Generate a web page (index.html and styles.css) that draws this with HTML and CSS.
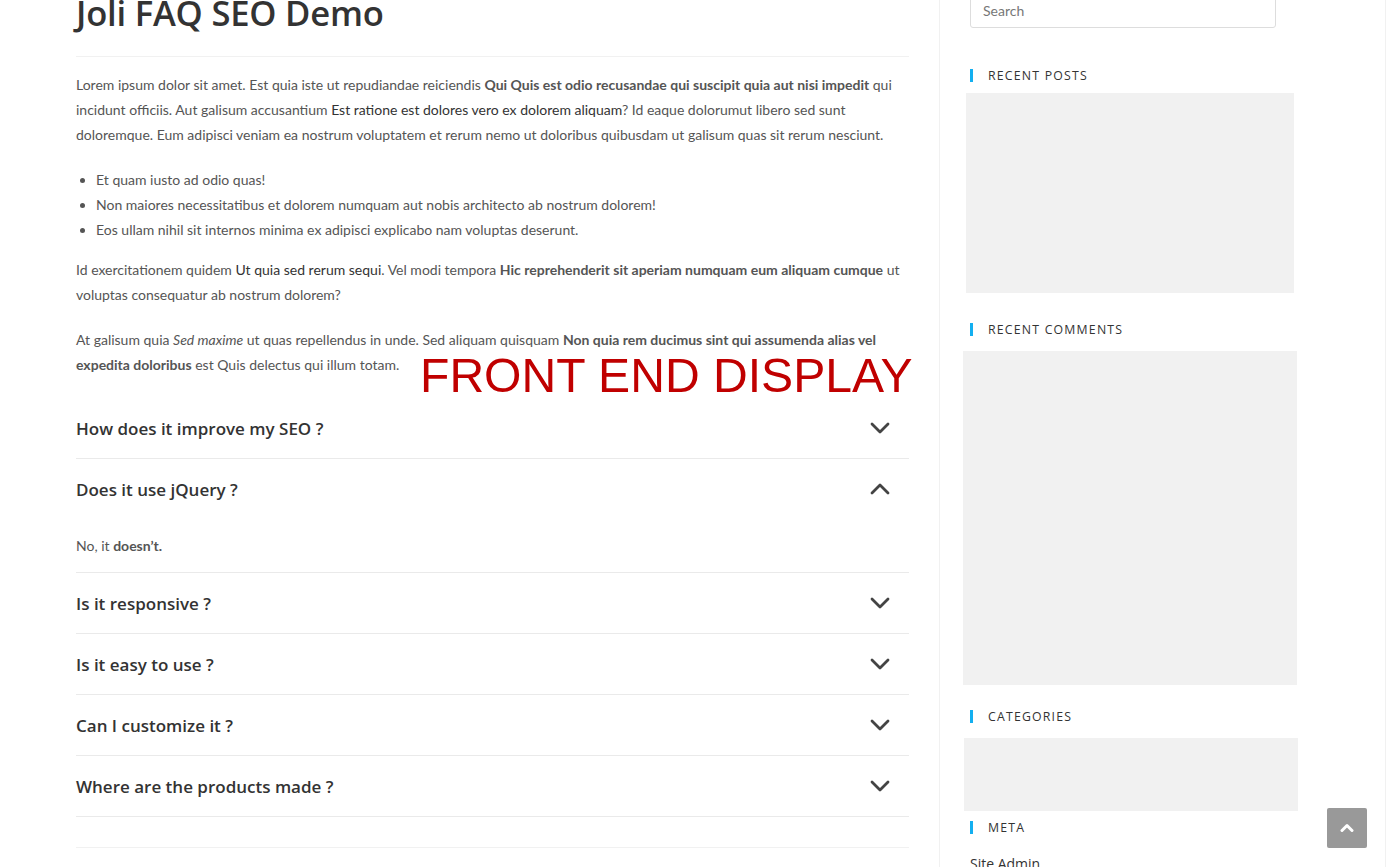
FILE: index.html
```html
<!DOCTYPE html>
<html lang="en">
<head>
<meta charset="utf-8">
<title>Joli FAQ SEO Demo</title>
<link rel="stylesheet" href="styles.css">
</head>
<body>
<div class="page">
  <main class="main">
    <header class="page-header">
      <h1 class="page-title">Joli FAQ SEO Demo</h1>
    </header>
    <div class="entry">
      <p>Lorem ipsum dolor sit amet. Est quia iste ut repudiandae reiciendis <strong>Qui Quis est odio recusandae qui suscipit quia aut nisi impedit</strong> qui incidunt officiis. Aut galisum accusantium <a href="#">Est ratione est dolores vero ex dolorem aliquam</a>? Id eaque dolorumut libero sed sunt doloremque. Eum adipisci veniam ea nostrum voluptatem et rerum nemo ut doloribus quibusdam ut galisum quas sit rerum nesciunt.</p>
      <ul class="list">
        <li>Et quam iusto ad odio quas!</li>
        <li>Non maiores necessitatibus et dolorem numquam aut nobis architecto ab nostrum dolorem!</li>
        <li>Eos ullam nihil sit internos minima ex adipisci explicabo nam voluptas deserunt.</li>
      </ul>
      <p class="p2">Id exercitationem quidem <a href="#">Ut quia sed rerum sequi</a>. Vel modi tempora <strong>Hic reprehenderit sit aperiam numquam eum aliquam cumque</strong> ut voluptas consequatur ab nostrum dolorem?</p>
      <div class="p3wrap">
        <p>At galisum quia <em>Sed maxime</em> ut quas repellendus in unde. Sed aliquam quisquam <strong>Non quia rem ducimus sint qui assumenda alias vel expedita doloribus</strong> est Quis delectus qui illum totam.</p>
        <div class="stamp">FRONT END DISPLAY</div>
      </div>

      <div class="faq">
        <div class="faq-item">
          <div class="faq-q"><span>How does it improve my SEO ?</span><svg class="chev" viewBox="0 0 20 12"><path d="M2 2l8 8 8-8"/></svg></div>
        </div>
        <div class="faq-item open">
          <div class="faq-q"><span>Does it use jQuery ?</span><svg class="chev" viewBox="0 0 20 12"><path d="M2 10l8-8 8 8"/></svg></div>
          <div class="faq-a">No, it <strong>doesn’t.</strong></div>
        </div>
        <div class="faq-item">
          <div class="faq-q"><span>Is it responsive ?</span><svg class="chev" viewBox="0 0 20 12"><path d="M2 2l8 8 8-8"/></svg></div>
        </div>
        <div class="faq-item">
          <div class="faq-q"><span>Is it easy to use ?</span><svg class="chev" viewBox="0 0 20 12"><path d="M2 2l8 8 8-8"/></svg></div>
        </div>
        <div class="faq-item">
          <div class="faq-q"><span>Can I customize it ?</span><svg class="chev" viewBox="0 0 20 12"><path d="M2 2l8 8 8-8"/></svg></div>
        </div>
        <div class="faq-item">
          <div class="faq-q"><span>Where are the products made ?</span><svg class="chev" viewBox="0 0 20 12"><path d="M2 2l8 8 8-8"/></svg></div>
        </div>
      </div>
      <div class="after-line"></div>
    </div>
  </main>

  <aside class="sidebar">
    <div class="search"><input type="text" placeholder="Search"></div>

    <section class="widget w-posts">
      <h4 class="widget-title">Recent Posts</h4>
      <div class="ph ph-posts"></div>
    </section>
    <section class="widget w-comments">
      <h4 class="widget-title">Recent Comments</h4>
      <div class="ph ph-comments"></div>
    </section>
    <section class="widget w-cats">
      <h4 class="widget-title">Categories</h4>
      <div class="ph ph-cats"></div>
    </section>
    <section class="widget w-meta">
      <h4 class="widget-title">Meta</h4>
      <div class="meta-link">Site Admin</div>
    </section>
  </aside>
</div>

<a class="to-top" href="#"><svg viewBox="0 0 14 10"><path d="M2 7.5l5-5 5 5"/></svg></a>
</body>
</html>
```

FILE: styles.css
```css
html, body {
  margin: 0;
  padding: 0;
  background: #fff;
  overflow: hidden;
}
body {
  font-family: Lato, "Liberation Sans", sans-serif;
  font-size: 14px;
  color: #555;
}
.page {
  display: flex;
  width: 1389px;
  height: 867px;
  overflow: hidden;
}
.main {
  width: 833px;
  padding: 0 30px 0 76px;
  flex: none;
}
.page-header {
  margin-top: -14px;
  height: 71px;
  border-bottom: 1px solid #f1f1f1;
  box-sizing: border-box;
}
.page-title {
  margin: 0;
  font-family: "Open Sans", "Noto Sans", sans-serif;
  font-weight: 600;
  font-size: 34.6px;
  line-height: 54px;
  color: #333;
  letter-spacing: -0.2px;
}
.entry {
  padding-top: 15px;
}
.entry p {
  margin: 0 0 20px;
  line-height: 25px;
}
.entry strong {
  font-weight: 700;
  color: #555;
}
.entry a {
  color: #333;
  text-decoration: none;
}
.list {
  margin: 0 0 15px;
  padding-left: 20px;
  line-height: 25px;
}
.p2 { margin-bottom: 20px; }
.p3wrap {
  position: relative;
}
.stamp {
  position: absolute;
  left: 344px;
  top: 20px;
  font-family: "Liberation Sans", Arial, sans-serif;
  font-size: 48.1px;
  line-height: 56px;
  color: #c00000;
  white-space: nowrap;
}
.faq {
  padding-top: 1px;
}
.faq-item {
  border-bottom: 1px solid #eaeaea;
}
.faq-q {
  height: 60px;
  display: flex;
  align-items: center;
  justify-content: space-between;
  font-family: "Open Sans", "Noto Sans", sans-serif;
  font-weight: 600;
  font-size: 17px;
  color: #333;
}
.chev {
  width: 20px;
  height: 12px;
  margin-right: 19px;
  fill: none;
  stroke: #444;
  stroke-width: 2.8;
  stroke-linecap: round;
  stroke-linejoin: round;
}
.faq-a {
  padding: 14px 0;
  line-height: 25px;
  font-size: 14px;
}
.after-line {
  margin-top: 30px;
  border-top: 1px solid #f1f1f1;
}

.sidebar {
  width: 447px;
  flex: none;
  border-left: 1px solid #f1f1f1;
  border-right: 1px solid #f1f1f1;
  padding-left: 30px;
  box-sizing: border-box;
  font-family: "Open Sans", "Noto Sans", sans-serif;
}
.search {
  margin-top: -7px;
}
.search input {
  display: block;
  width: 306px;
  height: 35px;
  box-sizing: border-box;
  border: 1px solid #ddd;
  border-radius: 3px;
  padding: 0 12px;
  font-family: Lato, sans-serif;
  font-size: 14px;
  color: #555;
  outline: none;
}
.search input::placeholder { color: #777; }
.widget-title {
  margin: 0;
  border-left: 3px solid #13aff0;
  padding-left: 15px;
  font-size: 12.3px;
  font-weight: 400;
  letter-spacing: 1.2px;
  text-transform: uppercase;
  color: #333;
  line-height: 13px;
}
.ph { background: #f1f1f1; }

.w-posts .widget-title { margin-top: 41px; }
.ph-posts {
  margin: 11px 0 0 -4px;
  width: 328px;
  height: 200px;
}
.w-comments .widget-title { margin-top: 30px; }
.ph-comments {
  margin: 15px 0 0 -7px;
  width: 334px;
  height: 334px;
}
.w-cats .widget-title { margin-top: 25px; }
.ph-cats {
  margin: 15px 0 0 -6px;
  width: 334px;
  height: 73px;
}
.w-meta .widget-title { margin-top: 10px; }
.meta-link {
  margin-top: 20px;
  font-size: 14px;
  line-height: 19px;
  color: #333;
}

.to-top {
  position: fixed;
  left: 1327px;
  top: 808px;
  width: 40px;
  height: 40px;
  border-radius: 2px;
  background: #999;
  display: flex;
  align-items: center;
  justify-content: center;
}
.to-top svg {
  width: 14px;
  height: 10px;
  fill: none;
  stroke: #fff;
  stroke-width: 3;
  stroke-linecap: round;
  stroke-linejoin: round;
}
```
